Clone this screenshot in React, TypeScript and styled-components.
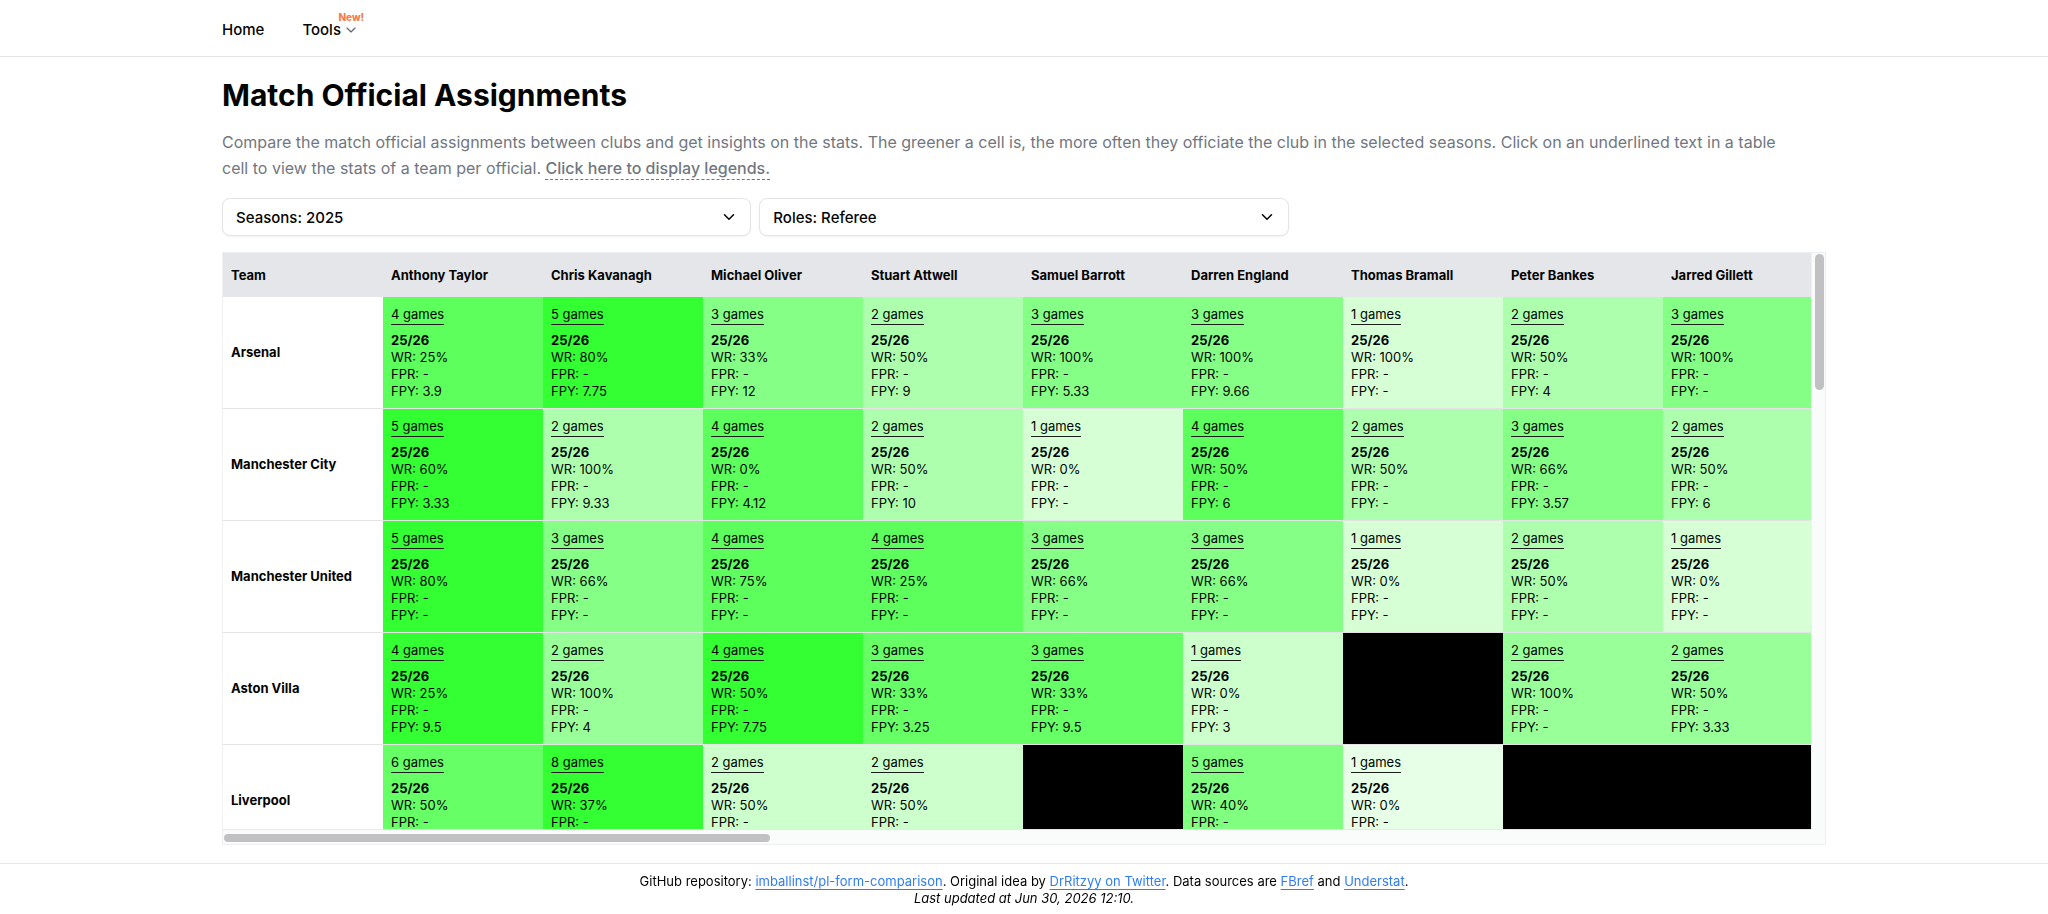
import React from "react";
import styled, { createGlobalStyle } from "styled-components";
import { ChevronDown } from "lucide-react";

const GlobalStyle = createGlobalStyle`
  *, *::before, *::after { box-sizing: border-box; }
  body {
    margin: 0;
    color: #020402;
    background: #fff;
    font-family: Inter, "Liberation Sans", sans-serif;
    font-size: 13px;
    line-height: 17px;
  }
  button, select { font: inherit; color: inherit; }
`;

const Page = styled.div`
  display: flex;
  flex-direction: column;
  height: 100vh;
`;

const Container = styled.div`
  width: 100%;
  max-width: 1636px;
  margin: 0 auto;
  padding: 0 16px;
`;

const Header = styled.header`
  flex: none;
  border-bottom: 1px solid #e4e4e7;
`;

const Nav = styled.nav`
  display: flex;
  align-items: center;
  gap: 38px;
  height: 56px;
  padding-top: 4px;
  font-size: 15px;
  line-height: 20px;
  font-weight: 500;
`;

const NavLink = styled.a`
  color: inherit;
  text-decoration: none;
`;

const NavMenu = styled.button`
  position: relative;
  display: flex;
  align-items: center;
  gap: 2px;
  padding: 0;
  border: 0;
  background: none;
  font-weight: 500;
`;

const NewBadge = styled.span`
  position: absolute;
  left: 36px;
  top: -9px;
  color: #f97b4b;
  font-size: 10px;
  line-height: 12px;
  font-weight: 800;
`;

const Main = styled(Container).attrs({ as: "main" })`
  flex: 1;
  min-height: 0;
  display: flex;
  flex-direction: column;
  padding-top: 20px;
  padding-bottom: 18px;
`;

const Title = styled.h1`
  margin: 0;
  font-size: 30px;
  line-height: 36px;
  font-weight: 700;
`;

const Intro = styled.p`
  max-width: 1580px;
  margin: 16px 0 17px;
  color: #71777f;
  font-size: 16px;
  line-height: 26px;
`;

const LegendButton = styled.button`
  padding: 0;
  border: 0;
  background: none;
  font-weight: 500;
  line-height: 20px;
  text-decoration: underline dashed 1px;
  text-underline-offset: 5px;
`;

const Filters = styled.div`
  display: grid;
  grid-template-columns: repeat(3, 1fr);
  gap: 8px;
  margin-bottom: 16px;
`;

const SelectBox = styled.div`
  display: grid;
  align-items: center;

  & > * { grid-area: 1 / 1; }
  & > svg { justify-self: end; margin-right: 13px; pointer-events: none; }
`;

const Select = styled.select`
  appearance: none;
  height: 38px;
  padding: 0 32px 0 13px;
  border: 1px solid #e4e4e7;
  border-radius: 8px;
  background: #fff;
  box-shadow: 0 1px 2px rgba(0, 0, 0, 0.05);
  font-size: 15px;
  font-weight: 500;
`;

const TableFrame = styled.div`
  flex: 1;
  min-height: 0;
  display: grid;
  grid-template-columns: minmax(0, 1fr) 14px;
  grid-template-rows: minmax(0, 1fr) 15px;
  border: 1px solid #eeeff0;
  background: #fafbfb;
`;

const Viewport = styled.div`
  overflow: auto;
  scrollbar-width: none;
  background: #fff;
`;

const VerticalTrack = styled.div`
  padding: 1px 1px 1px 3px;
  border-left: 1px solid #f0f0f0;
`;

const HorizontalTrack = styled.div`
  padding: 4px 1px 2px;
  border-top: 1px solid #e8e8e8;
`;

const Thumb = styled.div<{ $vertical?: boolean }>`
  border-radius: 5px;
  background: #c1c1c3;
  width: ${(p) => (p.$vertical ? "100%" : "34.4%")};
  height: ${(p) => (p.$vertical ? "23.7%" : "100%")};
`;

const Table = styled.table`
  width: 1600px;
  table-layout: fixed;
  border-collapse: separate;
  border-spacing: 0;
`;

const HeadCell = styled.th`
  position: sticky;
  top: 0;
  height: 44px;
  padding: 0 8px;
  background: #e4e6ea;
  font-weight: 700;
  text-align: left;
`;

const TeamCell = styled.th`
  height: 112px;
  padding: 0 8px;
  border-bottom: 1px solid #e4e4e7;
  background: #fff;
  font-weight: 700;
  text-align: left;
`;

const StatCell = styled.td<{ $share: number }>`
  height: 112px;
  padding: 8px;
  border-bottom: 1px solid #e4e4e7;
  background: ${(p) => {
    if (!p.$share) return "#000";
    const level = Math.round(255 * (1 - 0.8 * p.$share));
    return `rgb(${level}, 255, ${level})`;
  }};
  vertical-align: top;
`;

const GamesButton = styled.button`
  display: block;
  margin-bottom: 7px;
  padding: 1px 0;
  border: 0;
  border-bottom: 1px solid #1c1c1c;
  background: none;
  line-height: 17px;
`;

const Season = styled.strong`
  display: block;
  font-weight: 700;
`;

const Stat = styled.div``;

const Footer = styled.footer`
  flex: none;
  padding: 9px 16px 7px;
  border-top: 1px solid #e8e8ea;
  text-align: center;
`;

const FooterLink = styled.a`
  color: #2f7df6;
  text-decoration: underline;
  text-underline-offset: 3px;
`;

const officials = [
  "Anthony Taylor", "Chris Kavanagh", "Michael Oliver", "Stuart Attwell", "Samuel Barrott",
  "Darren England", "Thomas Bramall", "Peter Bankes", "Jarred Gillett",
];

type Entry = [games: number, winRate: number, foulsPerYellow: string] | null;

const teams: { name: string; max: number; entries: Entry[] }[] = [
  { name: "Arsenal", max: 5, entries: [[4, 25, "3.9"], [5, 80, "7.75"], [3, 33, "12"], [2, 50, "9"], [3, 100, "5.33"], [3, 100, "9.66"], [1, 100, "-"], [2, 50, "4"], [3, 100, "-"]] },
  { name: "Manchester City", max: 5, entries: [[5, 60, "3.33"], [2, 100, "9.33"], [4, 0, "4.12"], [2, 50, "10"], [1, 0, "-"], [4, 50, "6"], [2, 50, "-"], [3, 66, "3.57"], [2, 50, "6"]] },
  { name: "Manchester United", max: 5, entries: [[5, 80, "-"], [3, 66, "-"], [4, 75, "-"], [4, 25, "-"], [3, 66, "-"], [3, 66, "-"], [1, 0, "-"], [2, 50, "-"], [1, 0, "-"]] },
  { name: "Aston Villa", max: 4, entries: [[4, 25, "9.5"], [2, 100, "4"], [4, 50, "7.75"], [3, 33, "3.25"], [3, 33, "9.5"], [1, 0, "3"], null, [2, 100, "-"], [2, 50, "3.33"]] },
  { name: "Liverpool", max: 8, entries: [[6, 50, "-"], [8, 37, "-"], [2, 50, "-"], [2, 50, "-"], null, [5, 40, "-"], [1, 0, "-"], null, null] },
];

function Filter({ label }: { label: string }) {
  return (
    <SelectBox>
      <Select aria-label={label.split(":")[0]}>
        <option>{label}</option>
      </Select>
      <ChevronDown size={18} />
    </SelectBox>
  );
}

export default function App() {
  return (
    <Page>
      <GlobalStyle />
      <Header>
        <Container>
          <Nav>
            <NavLink href="#">Home</NavLink>
            <NavMenu>
              Tools
              <NewBadge>New!</NewBadge>
              <ChevronDown size={16} strokeWidth={1.75} color="#5f656b" />
            </NavMenu>
          </Nav>
        </Container>
      </Header>
      <Main>
        <Title>Match Official Assignments</Title>
        <Intro>
          Compare the match official assignments between clubs and get insights on the stats. The greener a cell is, the
          more often they officiate the club in the selected seasons. Click on an underlined text in a table cell to view
          the stats of a team per official. <LegendButton>Click here to display legends.</LegendButton>
        </Intro>
        <Filters>
          <Filter label="Seasons: 2025" />
          <Filter label="Roles: Referee" />
        </Filters>
        <TableFrame>
          <Viewport>
            <Table>
              <thead>
                <tr>
                  <HeadCell>Team</HeadCell>
                  {officials.map((name) => (
                    <HeadCell key={name}>{name}</HeadCell>
                  ))}
                </tr>
              </thead>
              <tbody>
                {teams.map((team) => (
                  <tr key={team.name}>
                    <TeamCell scope="row">{team.name}</TeamCell>
                    {team.entries.map((entry, i) => (
                      <StatCell key={officials[i]} $share={entry ? entry[0] / team.max : 0}>
                        {entry && (
                          <>
                            <GamesButton>{entry[0]} games</GamesButton>
                            <Season>25/26</Season>
                            <Stat>WR: {entry[1]}%</Stat>
                            <Stat>FPR: -</Stat>
                            <Stat>FPY: {entry[2]}</Stat>
                          </>
                        )}
                      </StatCell>
                    ))}
                  </tr>
                ))}
              </tbody>
            </Table>
          </Viewport>
          <VerticalTrack>
            <Thumb $vertical />
          </VerticalTrack>
          <HorizontalTrack>
            <Thumb />
          </HorizontalTrack>
        </TableFrame>
      </Main>
      <Footer>
        GitHub repository: <FooterLink href="#">imballinst/pl-form-comparison</FooterLink>. Original idea by{" "}
        <FooterLink href="#">DrRitzyy on Twitter</FooterLink>. Data sources are <FooterLink href="#">FBref</FooterLink>{" "}
        and <FooterLink href="#">Understat</FooterLink>.
        <br />
        <em>Last updated at Jun 30, 2026 12:10.</em>
      </Footer>
    </Page>
  );
}
